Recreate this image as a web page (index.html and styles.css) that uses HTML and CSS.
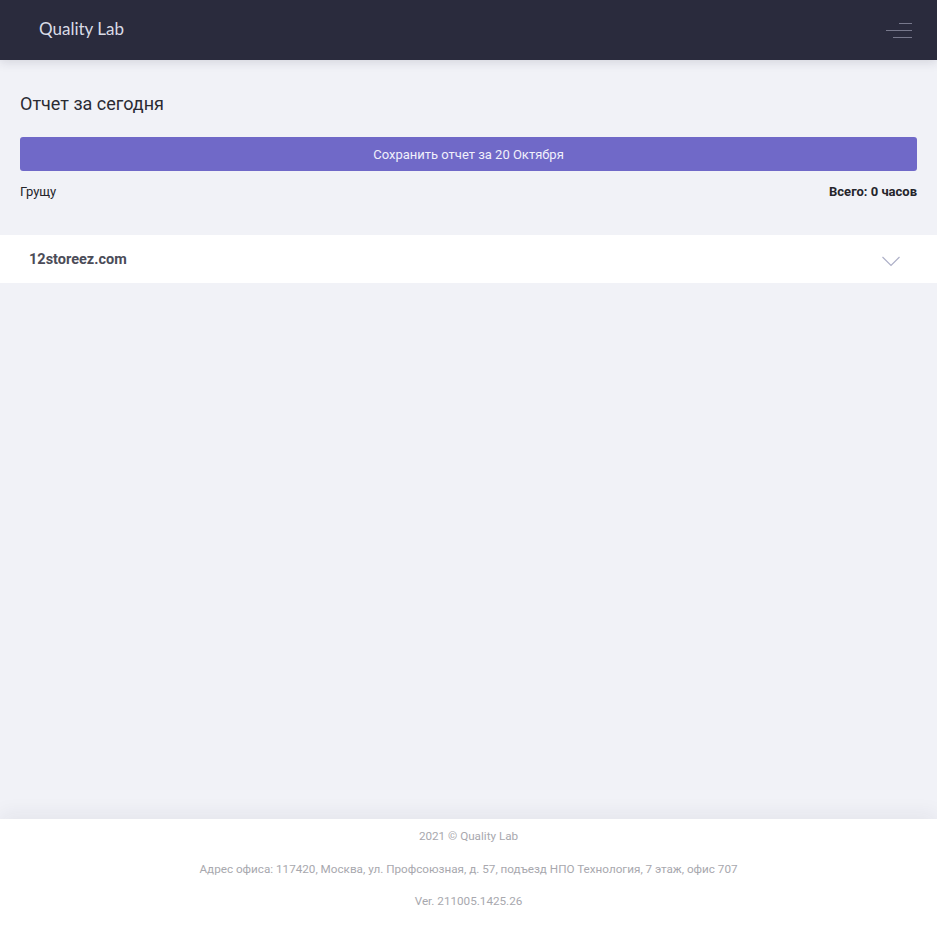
FILE: index.html
```html
<!DOCTYPE html>
<html lang="ru">
<head>
<meta charset="utf-8">
<title>Quality Lab</title>
<link rel="stylesheet" href="styles.css">
</head>
<body>
<div class="page">
  <header class="topbar">
    <div class="logo">Quality Lab</div>
    <button class="burger" aria-label="Меню">
      <svg width="28" height="18" viewBox="0 0 28 18">
        <line x1="14" y1="2.5" x2="27" y2="2.5" stroke="#77788c" stroke-width="1"/>
        <line x1="1" y1="9.5" x2="27" y2="9.5" stroke="#77788c" stroke-width="1"/>
        <line x1="8" y1="16.5" x2="27" y2="16.5" stroke="#77788c" stroke-width="1"/>
      </svg>
    </button>
  </header>
  <main class="main">
    <section class="report">
      <h1 class="title">Отчет за сегодня</h1>
      <button class="save-btn">Сохранить отчет за 20 Октября</button>
      <div class="summary">
        <span class="mood">Грущу</span>
        <span class="total">Всего: 0 часов</span>
      </div>
    </section>
    <div class="project">
      <span class="project-name">12storeez.com</span>
      <svg class="chevron" width="18" height="11" viewBox="0 0 18 11">
        <polyline points="0.5,1 9,9.5 17.5,1" fill="none" stroke="#aeb0c8" stroke-width="1.2"/>
      </svg>
    </div>
  </main>
  <footer class="footer">
    <p>2021 © Quality Lab</p>
    <p>Адрес офиса: 117420, Москва, ул. Профсоюзная, д. 57, подъезд НПО Технология, 7 этаж, офис 707</p>
    <p>Ver. 211005.1425.26</p>
  </footer>
</div>
</body>
</html>
```
FILE: styles.css
```css
* { box-sizing: border-box; }
html, body { margin: 0; padding: 0; }
body {
  background: #f1f2f7;
  font-family: Roboto, "Noto Sans", sans-serif;
  color: #222;
}
.page {
  min-height: 100vh;
  display: flex;
  flex-direction: column;
}
.topbar {
  height: 60px;
  background: #2a2b3d;
  display: flex;
  align-items: center;
  justify-content: space-between;
  padding: 0 24px 0 39px;
  box-shadow: 0 2px 10px rgba(40, 42, 70, 0.15);
  position: relative;
  z-index: 2;
}
.logo {
  font-family: Lato, sans-serif;
  font-size: 17px;
  line-height: 20px;
  margin-top: -2px;
  color: #d9dbe6;
}
.burger {
  background: none;
  border: 0;
  padding: 0;
  width: 28px;
  height: 18px;
  display: flex;
}
.main { flex: 1; }
.report { padding: 33px 20px 36px; }
.title {
  margin: 0;
  font-weight: 400;
  font-size: 18px;
  line-height: 21px;
  color: #2b2b33;
}
.save-btn {
  display: block;
  width: 100%;
  margin-top: 23px;
  height: 34px;
  border: 0;
  border-radius: 3px;
  background: #7069c8;
  color: #f1f0fb;
  font-family: Roboto, sans-serif;
  font-size: 13px;
}
.summary {
  margin-top: 13px;
  display: flex;
  justify-content: space-between;
  font-size: 13px;
  line-height: 15px;
  color: #25252b;
}
.total { font-weight: 700; }
.project {
  background: #fff;
  height: 48px;
  display: flex;
  align-items: center;
  justify-content: space-between;
  padding: 0 37px 0 29px;
}
.project-name {
  font-size: 14.5px;
  font-weight: 700;
  color: #4b4c58;
}
.chevron { margin-top: 4px; }
.footer {
  background: #fff;
  height: 112px;
  padding-top: 11px;
  text-align: center;
  font-size: 11.7px;
  color: #a8a8ae;
  box-shadow: 0 -6px 18px rgba(40, 42, 70, 0.06);
}
.footer p {
  margin: 0 0 19px;
  line-height: 13.5px;
}
```
